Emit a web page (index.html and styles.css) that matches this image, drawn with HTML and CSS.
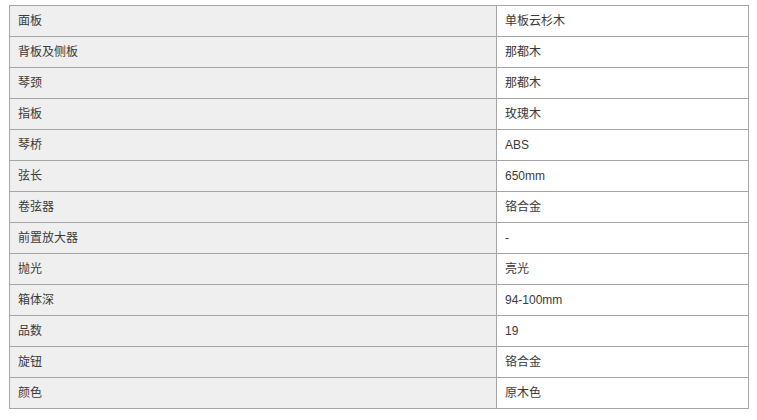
FILE: index.html
```html
<!DOCTYPE html>
<html lang="zh-CN">
<head>
<meta charset="utf-8">
<title>参数</title>
<link rel="stylesheet" href="styles.css">
</head>
<body>
<table class="spec">
<colgroup><col class="c-name"><col class="c-val"></colgroup>
<tbody>
<tr><td class="name">面板</td><td class="val">单板云杉木</td></tr>
<tr><td class="name">背板及侧板</td><td class="val">那都木</td></tr>
<tr><td class="name">琴颈</td><td class="val">那都木</td></tr>
<tr><td class="name">指板</td><td class="val">玫瑰木</td></tr>
<tr><td class="name">琴桥</td><td class="val">ABS</td></tr>
<tr><td class="name">弦长</td><td class="val">650mm</td></tr>
<tr><td class="name">卷弦器</td><td class="val">铬合金</td></tr>
<tr><td class="name">前置放大器</td><td class="val">-</td></tr>
<tr><td class="name">抛光</td><td class="val">亮光</td></tr>
<tr><td class="name">箱体深</td><td class="val">94-100mm</td></tr>
<tr><td class="name">品数</td><td class="val">19</td></tr>
<tr><td class="name">旋钮</td><td class="val">铬合金</td></tr>
<tr><td class="name">颜色</td><td class="val">原木色</td></tr>
</tbody>
</table>
</body>
</html>
```
FILE: styles.css
```css
html, body {
  margin: 0;
  background: #ffffff;
}
body {
  padding: 5px 9px;
  font-family: "Liberation Sans", Arial, "Noto Sans CJK SC", sans-serif;
  font-size: 12px;
  color: #3a3a3a;
}
.spec {
  width: 740px;
  border-collapse: collapse;
  table-layout: fixed;
}
.c-name { width: 487px; }
.spec td {
  border: 1px solid #a6a6a6;
  height: 31px;
  padding: 0 8px;
  box-sizing: border-box;
  line-height: 16px;
  vertical-align: middle;
}
.spec td.name {
  background: #efefef;
}
.spec td.val {
  background: #ffffff;
}
```
